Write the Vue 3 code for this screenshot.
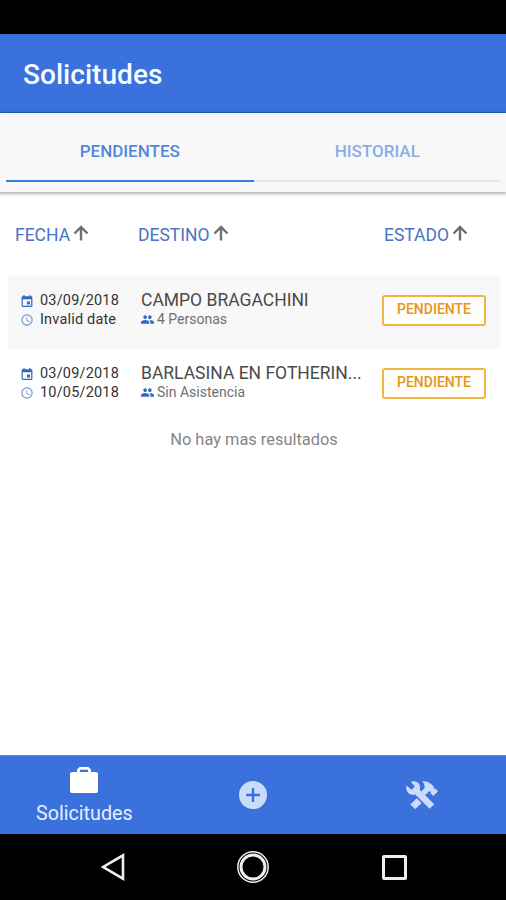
<script setup>
import { ref } from 'vue'

const tab = ref('pendientes')

const columns = [
  { key: 'fecha', label: 'FECHA' },
  { key: 'destino', label: 'DESTINO' },
  { key: 'estado', label: 'ESTADO' }
]

const rows = [
  { date: '03/09/2018', time: 'Invalid date', dest: 'CAMPO BRAGACHINI', people: '4 Personas', status: 'PENDIENTE' },
  { date: '03/09/2018', time: '10/05/2018', dest: 'BARLASINA EN FOTHERIN...', people: 'Sin Asistencia', status: 'PENDIENTE' }
]
</script>

<template>
  <div class="screen">
    <div class="status-bar"></div>
    <header class="toolbar"><h1>Solicitudes</h1></header>

    <nav class="segments">
      <button :class="['segment', { active: tab === 'pendientes' }]" @click="tab = 'pendientes'"><span>PENDIENTES</span></button>
      <button :class="['segment', { active: tab === 'historial' }]" @click="tab = 'historial'"><span>HISTORIAL</span></button>
    </nav>

    <main class="content">
      <div class="grid head">
        <div v-for="c in columns" :key="c.key" :class="['th', c.key]">
          <span>{{ c.label }}</span>
          <svg class="arrow" viewBox="0 0 16 16"><path d="M8 15.500V2M1.500 8.500 8 2l6.500 6.500" /></svg>
        </div>
      </div>

      <div v-for="(r, i) in rows" :key="i" class="grid row">
        <div class="when">
          <div class="line">
            <svg class="ico" viewBox="2 1 20 20"><path d="M17 12h-5v5h5v-5zM16 1v2H8V1H6v2H5c-1.100 0-2 .9-2 2v14c0 1.100.9 2 2 2h14c1.100 0 2-.9 2-2V5c0-1.100-.9-2-2-2h-1V1h-2zm3 18H5V8h14v11z" /></svg>
            <span class="date">{{ r.date }}</span>
          </div>
          <div class="line">
            <svg class="ico clock" viewBox="1.500 1.500 21 21"><path d="M12 2a10 10 0 1 0 0 20 10 10 0 0 0 0-20zm0 18a8 8 0 1 1 0-16 8 8 0 0 1 0 16zm.5-13H11v6l5.200 3.200.8-1.300-4.500-2.700V7z" /></svg>
            <span class="date">{{ r.time }}</span>
          </div>
        </div>
        <div class="where">
          <div class="dest">{{ r.dest }}</div>
          <div class="people">
            <svg class="ico group" viewBox="1 5 22 14"><path d="M16 11c1.660 0 2.990-1.340 2.990-3S17.660 5 16 5s-3 1.340-3 3 1.340 3 3 3zm-8 0c1.660 0 2.990-1.340 2.990-3S9.660 5 8 5 5 6.340 5 8s1.340 3 3 3zm0 2c-2.330 0-7 1.170-7 3.500V19h14v-2.500C15 14.170 10.330 13 8 13zm8 0c-.29 0-.62.02-.97.05 1.160.84 1.970 1.970 1.970 3.450V19h6v-2.500c0-2.330-4.670-3.500-7-3.500z" /></svg>
            <span>{{ r.people }}</span>
          </div>
        </div>
        <div class="badge"><span>{{ r.status }}</span></div>
      </div>

      <p class="end"><span>No hay mas resultados</span></p>
    </main>

    <nav class="tabbar">
      <a class="tab on">
        <svg class="case" viewBox="0 0 28 26"><path fill-rule="evenodd" d="M9.500 0h9L21 2.500V5h5a2 2 0 0 1 2 2v17a2 2 0 0 1-2 2H2a2 2 0 0 1-2-2V7a2 2 0 0 1 2-2h5V2.500zM10 2.800V5h8V2.800z" /></svg>
        <span>Solicitudes</span>
      </a>
      <a class="tab">
        <svg class="plus" viewBox="0 0 28 28"><path fill-rule="evenodd" d="M14 0a14 14 0 1 0 0 28 14 14 0 0 0 0-28zm-1.200 7h2.400v5.800H21v2.400h-5.800V21h-2.400v-5.800H7v-2.400h5.800z" /></svg>
      </a>
      <a class="tab">
        <svg class="tools" viewBox="0 0 32 28">
          <path d="M4.800.8C7.500-.4 11 .2 12.800 2.600c1.400 1.800 1.600 4 .9 6.100L28.200 23.300l-4.600 4.500L9.200 13.500C6.700 14.300 3.700 13.500 1.900 11.400.2 9.400-.2 6.700.7 4.400l4.800 4.300 3.300-3.200z" />
          <path d="M10.800 17.200 15.600 22 9.200 28.200 4.400 23.400z" />
          <path d="M16 .3c3.900-.5 7.100.6 9.700 3.200l2.200 2.200v2.200l1.500-.4 2.600 2.700-4.700 4.700-2.700-2.700.5-1.600-2.200-.2-3.800 3.800-3.800-3.800 3.300-3.400c.2-2.500-.4-4.900-2.600-6.700z" />
        </svg>
      </a>
    </nav>

    <footer class="android">
      <svg class="back" viewBox="0 0 24 28"><path d="M22 2.300v23.400L2.200 14z" /></svg>
      <svg class="home" viewBox="0 0 34 34"><circle cx="17" cy="17" r="15.200" class="outer" /><circle cx="17" cy="17" r="12" class="inner" /></svg>
      <span class="recent"></span>
    </footer>
  </div>
</template>

<style>
body { margin: 0; background: #fff; }
</style>

<style scoped>
.screen { width: 506px; height: 900px; display: flex; flex-direction: column; background: #fff; font-family: Roboto, "Liberation Sans", sans-serif; overflow: hidden; }
.status-bar { height: 34px; background: #000; flex: none; }
.toolbar { box-sizing: border-box; height: 79px; flex: none; background: #3b71dc; border-bottom: 1px solid #1763c5; padding-left: 23px; display: flex; align-items: center; }
h1 { margin: 4px 0 0; font-size: 28.100px; line-height: 32px; font-weight: 500; color: #f6fbff; }
.segments { box-sizing: border-box; height: 79px; flex: none; background: #f8f8f8; padding: 0 5px 10px 6px; display: flex; box-shadow: 0 1px 3px 1px rgba(0, 0, 0, .3); }
.segment { flex: 1; border: 0; border-bottom: 2px solid #e8e8e8; background: none; padding: 9px 0 0; font: 500 17px/20px Roboto, sans-serif; color: #3b78dc; }
.segment span { opacity: .58; }
.segment.active { border-bottom-color: #2e80e3; }
.segment.active span { opacity: .88; }
.content { flex: 1; padding: 0 6px 0 8px; }
.grid { display: grid; grid-template-columns: 120px 235px 1fr; }
.head { height: 84px; align-items: center; }
.th { display: flex; align-items: center; gap: 3px; font-size: 17.500px; line-height: 22px; color: #4a72c6; margin-left: 7px; }
.th.destino { margin-left: 10px; }
.th.estado { margin-left: 21px; }
.th span { padding-top: 1px; }
.arrow { width: 16px; height: 16px; margin-top: -2px; fill: none; stroke: #707070; stroke-width: 2.400; }
.row { height: 73px; box-sizing: border-box; padding-top: 14px; align-items: start; }
.row:nth-child(even) { background: #f8f8f8; }
.when { padding: 1px 0 0 13px; }
.line { display: flex; align-items: center; height: 19px; font-size: 14.500px; color: #333; }
.ico { width: 12px; height: 12px; margin-right: 7px; fill: #2f68c4; flex: none; }
.clock { fill: #6f92cf; }
.date { letter-spacing: .18px; }
.where { padding-left: 13px; }
.dest { font-size: 17.500px; line-height: 20px; color: #4a4a4a; white-space: nowrap; }
.people { display: flex; align-items: center; height: 18px; font-size: 14px; color: #707070; }
.group { width: 13px; height: 9px; margin-right: 3px; }
.badge { box-sizing: border-box; margin: 5px 0 0 19px; width: 104px; height: 31px; border: 2px solid #eeb744; border-radius: 3px; background: #fffefb; font-size: 14px; line-height: 25px; font-weight: 500; color: #e6941a; text-align: center; }
.end { margin: 8px 0 0; text-align: center; font-size: 16.400px; line-height: 20px; color: #858585; }
.tabbar { box-sizing: border-box; height: 79px; flex: none; background: #3b71dc; display: flex; border-top: 1px solid #5c8ce6; }
.tab { flex: 1; display: flex; flex-direction: column; align-items: center; justify-content: center; color: #e4f0ff; font-size: 19.700px; line-height: 24px; }
.tab svg { fill: #cbdcfa; }
.tab .case { width: 28px; height: 26px; fill: #fff; margin: 2px 0 9px; }
.plus { width: 28px; height: 28px; }
.tools { width: 32px; height: 28px; }
.android { height: 66px; flex: none; background: #000; display: flex; align-items: center; padding-left: 101px; }
.android svg { fill: none; stroke: #eee; stroke-width: 2.600; }
.back { width: 24px; height: 28px; margin-right: 111px; }
.home { width: 34px; height: 34px; margin-right: 112px; }
.android .outer { stroke-width: 1.500; }
.android .inner { stroke-width: 3; }
.recent { box-sizing: border-box; width: 25px; height: 25px; border: 3px solid #eee; border-radius: 2px; }
</style>
